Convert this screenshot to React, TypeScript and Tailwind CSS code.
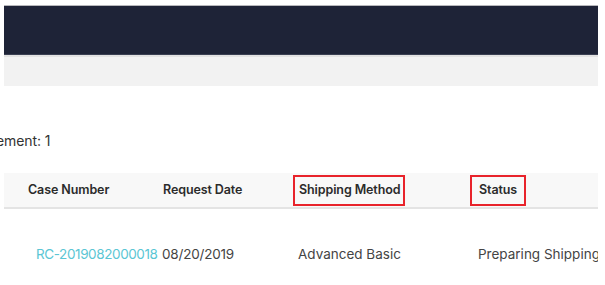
export default function App() {
  const font = { fontFamily: 'Inter, "Noto Sans", sans-serif' };
  return (
    <div className="w-[605px] h-[285px] bg-white overflow-hidden text-[#333]" style={font}>
      <div className="pt-[5px] pl-[4px] pr-[7px]">
        <div className="h-[1px] bg-[#b8b8bc]" />
        <div className="h-[49px] bg-[#1e2337] border-b border-[#3a3f52]" />
        <div className="h-[2px] bg-[#e2e2e2]" />
        <div className="h-[29px] bg-[#f2f2f2]" />
      </div>

      <div className="mt-[45px] overflow-hidden">
        <p className="-ml-[4px] text-[14px] leading-[20px] whitespace-nowrap tracking-[-0.1px]">ement: 1</p>
      </div>

      <div className="mt-[22px] pl-[4px] pr-[7px]">
        <div className="grid grid-cols-[159px_135px_180px_1fr] h-[36px] items-center bg-[#f8f8f8] border-b-2 border-[#e4e4e4] text-[12.5px] font-semibold text-[#2b2b2b] tracking-[-0.1px]">
          <div className="pl-[24px] whitespace-nowrap">Case Number</div>
          <div className="whitespace-nowrap">Request Date</div>
          <div className="-ml-[5px]">
            <span className="inline-flex items-center h-[31px] pl-[4px] pr-[3px] border-2 border-[#e8232b] whitespace-nowrap">Shipping Method</span>
          </div>
          <div className="-ml-[8px]">
            <span className="inline-flex items-center h-[31px] pl-[7px] pr-[7px] border-2 border-[#e8232b] whitespace-nowrap">Status</span>
          </div>
        </div>

        <div className="grid grid-cols-[158px_136px_180px_1fr] h-[90px] items-center text-[13.5px] text-[#444]">
          <div className="pl-[32px] whitespace-nowrap text-[#5bc6d4] tracking-[-0.4px]">RC-2019082000018</div>
          <div className="whitespace-nowrap tracking-[-0.2px]">08/20/2019</div>
          <div className="whitespace-nowrap">Advanced Basic</div>
          <div className="whitespace-nowrap overflow-hidden">Preparing Shipping</div>
        </div>
      </div>
    </div>
  );
}
